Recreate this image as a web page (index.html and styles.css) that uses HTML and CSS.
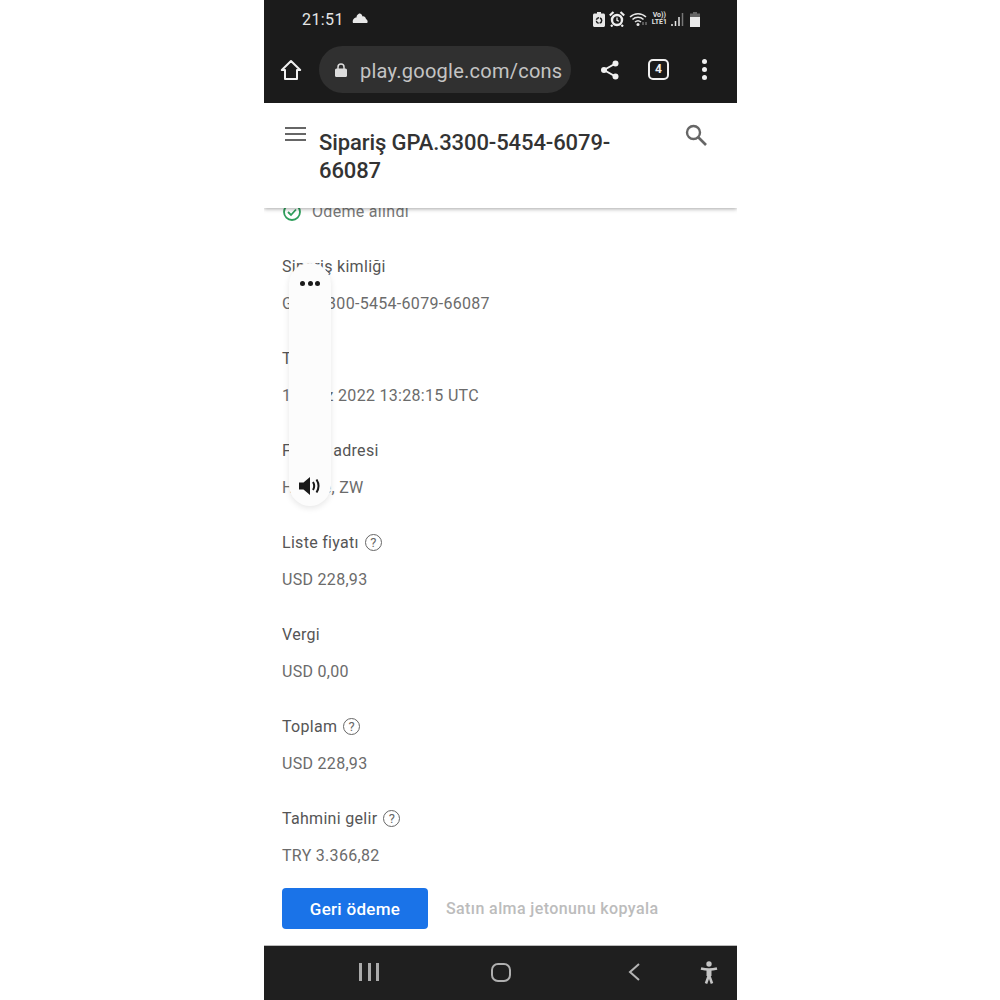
FILE: index.html
```html
<!DOCTYPE html>
<html lang="tr">
<head>
    <meta charset="UTF-8">
    <meta name="viewport" content="width=device-width, initial-scale=1.0">
    <title>Sipariş GPA.3300-5454-6079-66087</title>
    <link rel="stylesheet" href="styles.css">
</head>
<body>
    <div class="phone">
        <!-- status bar and browser toolbar -->
        <div class="topbar">
            <div class="status">
                <span class="time">21:51</span>
                <svg class="cloud" width="16" height="10" viewBox="0 0 16 10"><path fill="#e8e8e8" d="M1 10h14c1 0 1-3-1-4-.5-2-2-3-3.500-2.500C10 1 8 0 6.500 1 5 2 4.500 3 4.500 4.500 2 4.500 0 7 1 10z"/></svg>
                <div class="status-icons">
                    <svg width="12" height="15" viewBox="0 0 12 15"><path fill="#e8e8e8" d="M4 0h4v1.500h2.500c.8 0 1.500.7 1.500 1.500v10.500c0 .8-.7 1.500-1.500 1.500h-9C.7 15 0 14.300 0 13.500V3c0-.8.7-1.500 1.500-1.500H4z"/><circle cx="6" cy="8.500" r="2.700" fill="none" stroke="#1c1c1c" stroke-width="1.500" stroke-dasharray="3.500 1"/></svg>
                    <svg width="16" height="16" viewBox="0 0 16 16"><circle cx="8" cy="9" r="5" fill="none" stroke="#eee" stroke-width="2.400"/><path d="M8 6.500v2.800l1.800 1" fill="none" stroke="#eee" stroke-width="1.300"/><path d="M.8 4.500L4.500 1M15.200 4.500L11.500 1M3.500 14l-1.500 1.500M12.500 14l1.500 1.500" stroke="#eee" stroke-width="2.200"/></svg>
                    <svg width="19" height="14" viewBox="0 0 19 14"><path d="M1 5c4.500-4.500 11.500-4.500 16 0M3.500 7.500c3-3 8-3 11 0M6 10c1.700-1.500 4.300-1.500 6 0" fill="none" stroke="#e4e4e4" stroke-width="1.500"/><circle cx="9" cy="12.500" r="1.500" fill="#e8e8e8"/><path d="M14 10v3M17 10v3" stroke="#999" stroke-width="1"/></svg>
                    <div class="volte"><span>Vo))</span><span>LTE1</span></div>
                    <svg width="13" height="14" viewBox="0 0 13 14"><path d="M1 12v2M4.500 9v5M8 5v9" stroke="#e8e8e8" stroke-width="1.500"/><path d="M11.500 1v13" stroke="#777" stroke-width="1.500"/></svg>
                    <svg class="battery" width="10" height="15" viewBox="0 0 10 15"><path fill="#666" d="M3 0h4v1.500h3V5H0V1.500h3z"/><rect y="5" width="10" height="10" fill="#ececec"/></svg>
                </div>
            </div>
            <div class="toolbar">
                <svg class="home" width="22" height="22" viewBox="0 0 22 22"><path d="M11 2L1.800 11H5v9h12v-9h3.200z" fill="none" stroke="#f0f0f0" stroke-width="2" stroke-linejoin="round"/></svg>
                <div class="url">
                    <svg width="12" height="14" viewBox="0 0 12 14"><path d="M3 6V4a3 3 0 0 1 6 0v2" fill="none" stroke="#ddd" stroke-width="1.500"/><rect y="5.500" width="12" height="8.500" rx="1.500" fill="#ddd"/></svg>
                    <span class="url-text">play.google.com/cons</span>
                </div>
                <svg class="share" width="20" height="20" viewBox="0 0 20 20"><path d="M15.500 3.500L4 10l11.500 6.500" fill="none" stroke="#f0f0f0" stroke-width="2"/><circle cx="15.500" cy="3.500" r="3" fill="#f0f0f0"/><circle cx="4" cy="10" r="3" fill="#f0f0f0"/><circle cx="15.500" cy="16.500" r="3" fill="#f0f0f0"/></svg>
                <div class="tabs">4</div>
                <div class="more"><i></i><i></i><i></i></div>
            </div>
        </div>

        <div class="page">
            <!-- page header -->
            <div class="header">
                <div class="burger"><i></i><i></i><i></i></div>
                <h1 class="title">Sipariş GPA.3300-5454-6079-66087</h1>
                <svg class="search" width="22" height="22" viewBox="0 0 22 22"><circle cx="8.500" cy="8.500" r="6.500" fill="none" stroke="#666" stroke-width="2.400"/><path d="M13.500 13.500L21 21" stroke="#666" stroke-width="2.600"/></svg>
            </div>

            <!-- order details -->
            <div class="content">
                <div class="paid">
                    <svg width="20" height="20" viewBox="0 0 20 20"><circle cx="10" cy="10" r="8" fill="none" stroke="#2e9e5b" stroke-width="1.800"/><path d="M6 10l3 3 5-5.500" fill="none" stroke="#2e9e5b" stroke-width="1.800"/></svg>
                    <span>Ödeme alındı</span>
                </div>
                <div class="field">
                    <div class="label">Sipariş kimliği</div>
                    <div class="value">GPA.3300-5454-6079-66087</div>
                </div>
                <div class="field">
                    <div class="label">Tarih</div>
                    <div class="value">14 Haz 2022 13:28:15 UTC</div>
                </div>
                <div class="field">
                    <div class="label">Fatura adresi</div>
                    <div class="value">Harare, ZW</div>
                </div>
                <div class="field">
                    <div class="label">Liste fiyatı <span class="help">?</span></div>
                    <div class="value">USD 228,93</div>
                </div>
                <div class="field">
                    <div class="label">Vergi</div>
                    <div class="value">USD 0,00</div>
                </div>
                <div class="field">
                    <div class="label">Toplam <span class="help">?</span></div>
                    <div class="value">USD 228,93</div>
                </div>
                <div class="field">
                    <div class="label">Tahmini gelir <span class="help">?</span></div>
                    <div class="value">TRY 3.366,82</div>
                </div>
                <div class="actions">
                    <button class="refund">Geri ödeme</button>
                    <span class="copy">Satın alma jetonunu kopyala</span>
                </div>
            </div>

            <!-- floating reader pill -->
            <div class="pill">
                <div class="pill-dots"><i></i><i></i><i></i></div>
                <svg width="24" height="20" viewBox="0 0 24 20"><path fill="#1a1a1a" d="M1 6.500h4.500L12 1v18l-6.500-5.500H1z"/><path d="M15 6c1.500 2.500 1.500 5.500 0 8M18.500 3.500c2.500 4 2.500 9 0 13" fill="none" stroke="#1a1a1a" stroke-width="2"/></svg>
            </div>
        </div>

        <!-- android nav bar -->
        <div class="navbar">
            <div class="nav-recent"><i></i><i></i><i></i></div>
            <div class="nav-home"></div>
            <svg class="nav-back" width="14" height="20" viewBox="0 0 14 20"><path d="M12 2L3 10l9 8" fill="none" stroke="#b4b4b4" stroke-width="2"/></svg>
            <svg class="nav-a11y" width="18" height="23" viewBox="0 0 18 23"><circle cx="9" cy="3" r="2.700" fill="#c4c4c4"/><path d="M1 7.500c5 1.300 11 1.300 16 0M9 8.500V14M9 14l-3 8.500M9 14l3 8.500" fill="none" stroke="#c4c4c4" stroke-width="2.600"/><path d="M6.500 8.500h5V15h-5z" fill="#c4c4c4"/></svg>
        </div>
    </div>
</body>
</html>
```

FILE: styles.css
```css
body {
    margin: 0;
    background-color: white;
    font-family: Roboto, "Liberation Sans", sans-serif;
}
.phone {
    width: 473px;
    height: 1000px;
    margin-left: 264px;
    display: flex;
    flex-direction: column;
    overflow: hidden;
}
.topbar {
    height: 103px;
    flex-shrink: 0;
    background-color: #1b1b1b;
}
.status {
    height: 38px;
    padding-left: 38px;
    padding-right: 37px;
    display: flex;
    align-items: center;
    color: #e6e6e6;
}
.time {
    font-size: 16px;
    letter-spacing: 0.4px;
}
.cloud {
    margin-left: 8px;
    margin-bottom: 3px;
}
.status-icons {
    margin-left: auto;
    display: flex;
    align-items: center;
    gap: 4px;
}
.volte {
    display: flex;
    flex-direction: column;
    font-size: 7px;
    font-weight: 700;
    line-height: 7.500px;
    text-align: center;
    color: #e0e0e0;
}
.battery {
    margin-left: 2px;
}
.toolbar {
    height: 47px;
    margin-top: 8px;
    padding-left: 16px;
    display: flex;
    align-items: center;
}
.url {
    width: 252px;
    height: 47px;
    margin-left: 17px;
    padding-left: 16px;
    box-sizing: border-box;
    display: flex;
    align-items: center;
    gap: 13px;
    overflow: hidden;
    white-space: nowrap;
    border-radius: 24px;
    background-color: #303030;
}
.url-text {
    padding-top: 2px;
    font-size: 20px;
    color: #c4c4c4;
    letter-spacing: 0.25px;
}
.share {
    margin-left: 29px;
}
.tabs {
    width: 17px;
    height: 17px;
    margin-left: 28px;
    border: 2px solid #f0f0f0;
    border-radius: 5px;
    font-size: 12px;
    font-weight: 700;
    line-height: 17px;
    text-align: center;
    color: #f0f0f0;
}
.more {
    margin-left: 33px;
    display: flex;
    flex-direction: column;
    gap: 3px;
}
.more i {
    width: 5px;
    height: 5px;
    border-radius: 50%;
    background-color: #f0f0f0;
}
.page {
    flex: 1;
    position: relative;
    overflow: hidden;
    background-color: white;
}
.header {
    height: 105px;
    box-sizing: border-box;
    padding: 21px 30px 0 21px;
    display: flex;
    align-items: flex-start;
    position: relative;
    z-index: 1;
    background-color: white;
    box-shadow: 0 1px 4px rgba(0, 0, 0, 0.35);
}
.burger {
    width: 21px;
    margin-top: 3px;
    display: flex;
    flex-direction: column;
    gap: 4px;
}
.burger i {
    height: 2px;
    background-color: #666;
}
.title {
    width: 310px;
    margin: 5px 0 0 13px;
    font-size: 22px;
    font-weight: 500;
    line-height: 28px;
    letter-spacing: -0.1px;
    color: #333;
}
.search {
    margin-left: auto;
}
.content {
    margin-top: -8px;
    padding-left: 18px;
    display: flex;
    flex-direction: column;
    gap: 31px;
    font-size: 16px;
    line-height: 24px;
}
.paid {
    display: flex;
    align-items: center;
    gap: 10px;
    color: #777;
    letter-spacing: 0.3px;
}
.field {
    display: flex;
    flex-direction: column;
    gap: 13px;
}
.label {
    display: flex;
    align-items: center;
    gap: 6px;
    color: #555;
    letter-spacing: 0.3px;
}
.value {
    color: #6b6b6b;
    letter-spacing: 0.3px;
}
.help {
    width: 15px;
    height: 15px;
    margin-top: -2px;
    border: 1.500px solid #666;
    border-radius: 50%;
    font-size: 13px;
    line-height: 15px;
    text-align: center;
    color: #666;
}
.actions {
    margin-top: -11px;
    display: flex;
    align-items: center;
    gap: 18px;
}
.refund {
    width: 146px;
    height: 41px;
    padding: 0;
    border: none;
    border-radius: 4px;
    background-color: #1a73e8;
    color: white;
    font-family: Roboto, sans-serif;
    font-size: 17px;
    font-weight: 500;
    letter-spacing: 0.3px;
}
.copy {
    font-weight: 500;
    color: #bcbcbc;
    letter-spacing: 0.4px;
}
.pill {
    width: 42px;
    height: 243px;
    position: absolute;
    left: 25px;
    top: 160px;
    z-index: 2;
    border-radius: 21px;
    background-color: #fcfcfc;
    box-shadow: 0 2px 6px rgba(0, 0, 0, 0.1);
    display: flex;
    flex-direction: column;
    align-items: center;
    justify-content: space-between;
    padding: 18px 0 10px;
    box-sizing: border-box;
}
.pill-dots {
    display: flex;
    gap: 2.500px;
}
.pill-dots i {
    width: 5px;
    height: 5px;
    border-radius: 50%;
    background-color: #1a1a1a;
}
.navbar {
    height: 55px;
    flex-shrink: 0;
    padding-left: 95px;
    padding-bottom: 2px;
    display: flex;
    align-items: center;
    background-color: #1f1f1f;
    border-top: 1px solid #bbb;
    box-sizing: border-box;
}
.nav-recent {
    width: 20px;
    height: 18px;
    display: flex;
    justify-content: space-between;
}
.nav-recent i {
    width: 3px;
    background-color: #aaa;
}
.nav-home {
    width: 20px;
    height: 19px;
    margin-left: 112px;
    box-sizing: border-box;
    border: 2.500px solid #b0b0b0;
    border-radius: 7px;
}
.nav-back {
    margin-left: 116px;
}
.nav-a11y {
    margin-left: 59px;
}
```
